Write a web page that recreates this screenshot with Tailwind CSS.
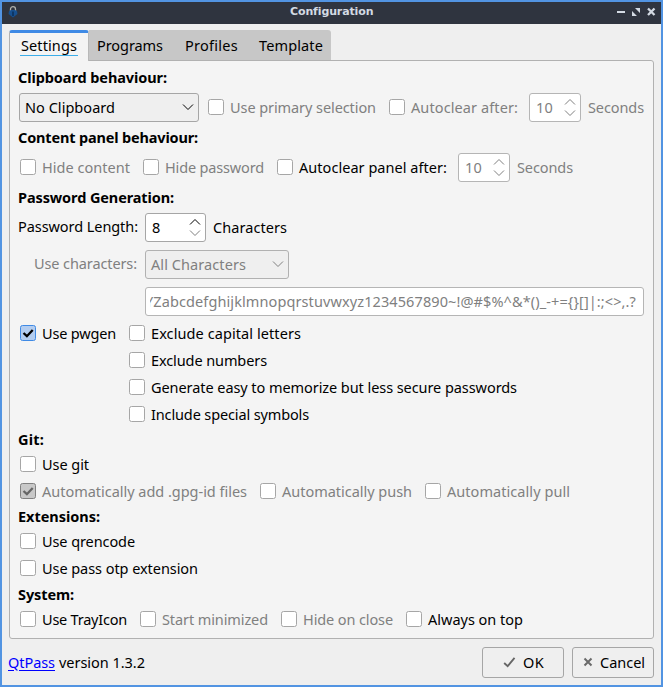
<!DOCTYPE html>
<html lang="en">
<head>
<meta charset="utf-8">
<title>Configuration</title>
<script src="https://cdn.jsdelivr.net/npm/@tailwindcss/browser@4"></script>
</head>
<body class="w-[663px] h-[687px] overflow-hidden">
<svg class="hidden">
  <symbol id="down" viewBox="0 0 12 8"><path d="M1 1.500l5 5 5-5" fill="none" stroke="currentColor"/></symbol>
  <symbol id="up" viewBox="0 0 12 8"><path d="M1 6.500l5-5 5 5" fill="none" stroke="currentColor"/></symbol>
  <symbol id="tick" viewBox="0 0 14 14"><path d="M2.500 7l3.400 3.200L11.700 4" fill="none" stroke="currentColor" stroke-width="2.300"/></symbol>
</svg>
<div class="w-[663px] h-[687px] border-2 border-[#5294e2] bg-[#efefef] flex flex-col text-black text-[14.5px] leading-[20px] font-['Noto_Sans',sans-serif] [&_span]:whitespace-nowrap [&_span]:shrink-0 [&_span]:inline-block [&_i]:block [&_i]:size-4 [&_i]:shrink-0 [&_i]:mb-px [&_i]:rounded-[2.5px] [&_i]:border [&_i]:border-[#a6a6a6] [&_i]:bg-white [&_label]:flex [&_label]:items-center [&_label]:gap-[5px] [&_label_span]:pl-px [&_label_span]:pb-[2px] [&_h2]:font-bold [&_h2]:flex [&_h2]:items-center">
  <header class="h-[22px] shrink-0 bg-[#2f343f] flex items-start relative">
    <svg class="absolute left-[6px] top-[4px] w-[10px] h-[12px]" viewBox="0 0 10 12"><path d="M2.500 5V3a2.500 2.300 0 0 1 5 0V5" fill="none" stroke="#b0b0aa" stroke-width="1.300"/><path d="M1 5l2-1h4l2 1 .5 3L5 11.500.5 8z" fill="#17508f"/><path d="M4.400 5.500h1.200v4.500H4.400z" fill="#08264a"/></svg>
    <div class="ml-[288px] text-[#d3dae3] text-[11px] leading-[18px] font-bold font-['DejaVu_Sans',sans-serif]"><span class="w-[83px] pt-px" data-fit>Configuration</span></div>
    <svg class="absolute left-[615px] top-[5px] w-[40px] h-[10px]" viewBox="0 0 40 10"><g fill="#d3dae3"><path d="M0 4h8v2H0zM18 1h5v5zM15 4l5 5h-5z"/></g><path d="M31 1.500l6.500 6.500M37.500 1.500L31 8" stroke="#d3dae3" stroke-width="2.300"/></svg>
  </header>
  <nav class="mt-[6px] ml-[7px] h-[30px] shrink-0 flex relative z-10">
    <div class="w-[80px] h-[31px] bg-[#f4f4f4] border-t-[3px] border-t-[#3f8ae5] border-l border-l-[#b1b1b1] border-r border-r-[#b9b9b9] rounded-t-[3px] pl-[10px]"><span class="w-[58px] h-[23px] leading-[25px] pl-px border-b border-[#3daee9]" data-fit>Settings</span></div>
    <div class="w-[242px] h-[30px] bg-[#c7c7c7] rounded-tr-[3px] flex items-center pl-[8px] pb-px pt-px"><span class="w-[66px] mr-[22px]" data-fit>Programs</span><span class="w-[53px] mr-[21px]" data-fit>Profiles</span><span class="w-[64px]" data-fit>Template</span></div>
  </nav>
  <main class="ml-[7px] w-[645px] h-[579px] shrink-0 bg-[#f4f4f4] border border-[#b1b1b1] rounded-[3px] rounded-tl-none pl-[8px] flex flex-col">
    <h2 class="h-[32px] pb-px"><span class="w-[149px]" data-fit>Clipboard behaviour:</span></h2>
    <div class="h-[29px] flex items-center">
      <div class="ml-px w-[180px] h-[29px] border border-[#a6a6a6] rounded-[3px] bg-[#efefef] flex items-center pl-[5px] pb-px"><span class="w-[90px]" data-fit>No Clipboard</span><svg class="ml-[67px] w-3 h-2"><use href="#down"/></svg></div>
      <label class="ml-[9px] text-[#808080]"><i></i><span class="w-[148px]" data-fit>Use primary selection</span></label>
      <label class="ml-[12px] text-[#808080]"><i></i><span class="w-[109px]" data-fit>Autoclear after:</span></label>
      <div class="ml-[10px] w-[52px] h-[29px] border border-[#b5b5b5] rounded-[3px] bg-white text-[#808080] flex items-center pl-[6px] pb-px"><span class="w-[17px]" data-fit>10</span><div class="ml-[11px] flex flex-col gap-[3px]"><svg class="w-3 h-2"><use href="#up"/></svg><svg class="w-3 h-2"><use href="#down"/></svg></div></div>
      <span class="ml-[6px] w-[58px] pl-px pb-[2px] text-[#808080]" data-fit>Seconds</span>
    </div>
    <h2 class="h-[31px] pb-px"><span class="w-[180px]" data-fit>Content panel behaviour:</span></h2>
    <div class="h-[29px] flex items-center">
      <label class="ml-[2px] text-[#808080]"><i></i><span class="w-[90px]" data-fit>Hide content</span></label>
      <label class="ml-[12px] text-[#808080]"><i></i><span class="w-[101px]" data-fit>Hide password</span></label>
      <label class="ml-[12px]"><i></i><span class="w-[150px]" data-fit>Autoclear panel after:</span></label>
      <div class="ml-[10px] w-[52px] h-[29px] border border-[#b5b5b5] rounded-[3px] bg-white text-[#808080] flex items-center pl-[6px] pb-px"><span class="w-[17px]" data-fit>10</span><div class="ml-[11px] flex flex-col gap-[3px]"><svg class="w-3 h-2"><use href="#up"/></svg><svg class="w-3 h-2"><use href="#down"/></svg></div></div>
      <span class="ml-[6px] w-[58px] pl-px pb-[2px] text-[#808080]" data-fit>Seconds</span>
    </div>
    <h2 class="h-[31px] pb-px"><span class="w-[156px]" data-fit>Password Generation:</span></h2>
    <div class="h-[29px] flex items-center">
      <span class="w-[120px] pb-[3px]" data-fit>Password Length:</span>
      <div class="ml-[7px] w-[61px] h-[29px] border border-[#a6a6a6] rounded-[3px] bg-white flex items-center pl-[6px] pb-px"><span class="w-[9px]" data-fit>8</span><div class="ml-[27.500px] flex flex-col gap-[3px]"><svg class="w-3 h-2"><use href="#up"/></svg><svg class="w-3 h-2 text-[#808080]"><use href="#down"/></svg></div></div>
      <span class="ml-[6px] w-[76px] pl-px pb-[2px]" data-fit>Characters</span>
    </div>
    <div class="mt-[8px] h-[29px] flex items-center text-[#808080]">
      <span class="ml-[15px] w-[105px] pl-px pb-[3px]" data-fit>Use characters:</span>
      <div class="ml-[7px] w-[144px] h-[29px] border border-[#b1b1b1] rounded-[3px] bg-[#efefef] flex items-center pl-[5px] pb-px"><span class="w-[95px]" data-fit>All Characters</span><svg class="ml-[26px] w-3 h-2"><use href="#down"/></svg></div>
    </div>
    <div class="mt-[8px] ml-[127px] w-[499px] h-[29px] border border-[#b5b5b5] rounded-[3px] bg-white text-[#808080] flex items-center pl-[4px] pr-[7px] pb-[2px]"><div class="w-full overflow-hidden flex justify-end"><span class="w-[491px]" data-fit>YZabcdefghijklmnopqrstuvwxyz1234567890~!@#$%^&amp;*()_-+={}[]|:;&lt;&gt;,.?</span></div></div>
    <div class="mt-[4px] ml-[2px] flex items-start">
      <label class="h-[27px]"><i class="!border-[#3f8ae5] !bg-[#b3cdf0]"><svg class="size-[14px]"><use href="#tick"/></svg></i><span class="w-[76px]" data-fit>Use pwgen</span></label>
      <div class="ml-[12px]">
        <label class="h-[27px]"><i></i><span class="w-[152px]" data-fit>Exclude capital letters</span></label>
        <label class="h-[27px]"><i></i><span class="w-[118px]" data-fit>Exclude numbers</span></label>
        <label class="h-[27px]"><i></i><span class="w-[368px]" data-fit>Generate easy to memorize but less secure passwords</span></label>
        <label class="h-[27px]"><i></i><span class="w-[160px]" data-fit>Include special symbols</span></label>
      </div>
    </div>
    <h2 class="h-[23px] pb-[2px]"><span class="w-[26px]" data-fit>Git:</span></h2>
    <label class="ml-[2px] h-[27px]"><i></i><span class="w-[49px]" data-fit>Use git</span></label>
    <div class="h-[27px] flex items-center text-[#808080]">
      <label class="ml-[2px]"><i class="!border-[#808080] !bg-[#c8c8c8]"><svg class="size-[14px] text-[#666]"><use href="#tick"/></svg></i><span class="w-[207px]" data-fit>Automatically add .gpg-id files</span></label>
      <label class="ml-[12px]"><i></i><span class="w-[132px]" data-fit>Automatically push</span></label>
      <label class="ml-[12px]"><i></i><span class="w-[125px]" data-fit>Automatically pull</span></label>
    </div>
    <h2 class="h-[23px] pb-[2px]"><span class="w-[82px]" data-fit>Extensions:</span></h2>
    <label class="ml-[2px] h-[27px]"><i></i><span class="w-[95px]" data-fit>Use qrencode</span></label>
    <label class="ml-[2px] h-[27px]"><i></i><span class="w-[158px]" data-fit>Use pass otp extension</span></label>
    <h2 class="h-[24px]"><span class="w-[56px]" data-fit>System:</span></h2>
    <div class="h-[27px] flex items-center">
      <label class="ml-[2px]"><i></i><span class="w-[87px]" data-fit>Use TrayIcon</span></label>
      <label class="ml-[12px] text-[#808080]"><i></i><span class="w-[108px]" data-fit>Start minimized</span></label>
      <label class="ml-[12px] text-[#808080]"><i></i><span class="w-[92px]" data-fit>Hide on close</span></label>
      <label class="ml-[12px]"><i></i><span class="w-[97px]" data-fit>Always on top</span></label>
    </div>
  </main>
  <footer class="ml-[6px] mt-[8px] h-[31px] flex items-center">
    <span class="w-[47px] pb-[2px] text-[#0000ff] underline underline-offset-[2px]" data-fit>QtPass</span><span class="ml-[4px] w-[86px] pb-[2px]" data-fit>version 1.3.2</span>
    <div class="ml-[337px] w-[82px] h-[31px] border border-[#a6a6a6] rounded-[3px] flex items-center pl-[20px]"><svg class="w-[13px] h-[11px] shrink-0" viewBox="0 0 14 12"><path d="M1.200 6.500l3.800 3.500L12.500 1" fill="none" stroke="#666" stroke-width="2"/></svg><span class="ml-[7px] w-[21px] pb-[2px]" data-fit>OK</span></div>
    <div class="ml-[8px] w-[82px] h-[31px] border border-[#a6a6a6] rounded-[3px] flex items-center pl-[10px]"><svg class="w-[10px] h-[10px] mb-[2px] shrink-0" viewBox="0 0 10 10"><path d="M1.500 1.500l7 7M8.500 1.500l-7 7" stroke="#6a6a6a" stroke-width="2"/></svg><span class="ml-[7px] w-[45px] pb-[2px]" data-fit>Cancel</span></div>
  </footer>
</div>
<script>
// Spread each caption over the width of its box, again whenever that box changes size
function fit(el) {
  el.style.letterSpacing = '0px';
  const cs = getComputedStyle(el);
  if (cs.display === 'inline') return;
  const r = document.createRange();
  r.selectNodeContents(el);
  const room = el.clientWidth - parseFloat(cs.paddingLeft) * 2;
  el.style.letterSpacing = (room - r.getBoundingClientRect().width) / el.textContent.length + 'px';
}
const watcher = new ResizeObserver(list => list.forEach(e => fit(e.target)));
document.querySelectorAll('[data-fit]').forEach(el => watcher.observe(el));
window.addEventListener('load', () => document.querySelectorAll('[data-fit]').forEach(fit));
</script>
</body>
</html>
